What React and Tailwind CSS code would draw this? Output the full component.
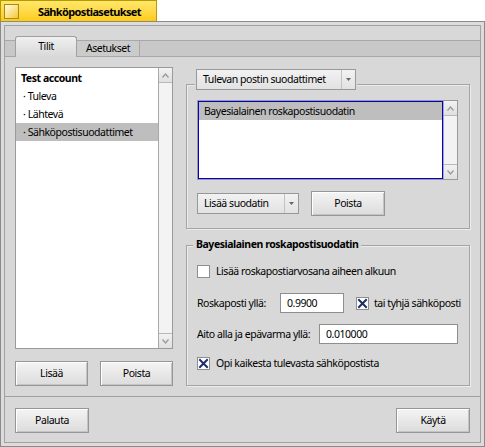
import React from 'react';

const btn =
  'flex items-center justify-center border border-[#969696] bg-gradient-to-b from-[#f4f4f4] to-[#dcdcdc] shadow-[inset_1px_1px_0_#ffffff,inset_-1px_-1px_0_#c4c4c4] text-black';

function CheckMark() {
  return (
    <svg width="11" height="11" viewBox="0 0 11 11" className="block">
      <path d="M2 2 L9 9 M9 2 L2 9" stroke="#1d2d69" strokeWidth="2" strokeLinecap="square" />
    </svg>
  );
}

function Checkbox({ checked }) {
  return (
    <div className="flex h-[13px] w-[13px] shrink-0 items-center justify-center border border-[#8e8e8e] bg-white">
      {checked && <CheckMark />}
    </div>
  );
}

function Arrow({ up }) {
  return (
    <svg width="7" height="5" viewBox="0 0 7 5" className="block">
      <path d={up ? 'M0.5 4.5 L3.5 1 L6.5 4.5' : 'M0.5 0.5 L3.5 4 L6.5 0.5'} fill="none" stroke="#9a9a9a" strokeWidth="1.3" />
    </svg>
  );
}

function ScrollBar() {
  return (
    <div className="flex w-[14px] shrink-0 flex-col border-l border-[#a8a8a8] bg-[#ececec]">
      <div className="flex h-[15px] items-center justify-center border-b border-[#b8b8b8] bg-gradient-to-b from-[#f2f2f2] to-[#e0e0e0]">
        <Arrow up />
      </div>
      <div className="flex-1 bg-[#f3f3f3]" />
      <div className="flex h-[15px] items-center justify-center border-t border-[#b8b8b8] bg-gradient-to-b from-[#f2f2f2] to-[#e0e0e0]">
        <Arrow />
      </div>
    </div>
  );
}

function MenuField({ label, className }) {
  return (
    <div className={`flex h-[21px] border border-[#989898] bg-gradient-to-b from-[#f2f2f2] to-[#e2e2e2] ${className}`}>
      <div className="flex flex-1 items-center pl-[6px] text-black">{label}</div>
      <div className="flex w-[14px] items-center justify-center border-l border-[#c2c2c2]">
        <svg width="5" height="3" viewBox="0 0 5 3" className="block">
          <path d="M0 0 H5 L2.5 3 Z" fill="#666" />
        </svg>
      </div>
    </div>
  );
}

const accounts = [
  { label: 'Test account', bold: true },
  { label: '· Tuleva' },
  { label: '· Lähtevä' },
  { label: '· Sähköpostisuodattimet', selected: true },
];

export default function App() {
  return (
    <div className="relative h-[447px] w-[485px] whitespace-nowrap bg-white font-['Noto_Sans',sans-serif] text-[10.5px] leading-none tracking-[-0.45px] text-black">
      {/* title tab */}
      <div className="flex h-[21px] w-[157px] items-center gap-[19px] border-r border-t border-l border-[#b89a00] bg-gradient-to-b from-[#ffe76a] to-[#ffcc00] pl-[3px]">
        <div className="h-[15px] w-[15px] shrink-0 border border-[#a88e10] bg-gradient-to-br from-[#fffbe0] to-[#f5c800]" />
        <div className="text-[11px] font-bold tracking-[-0.65px]">Sähköpostiasetukset</div>
      </div>

      {/* window frame */}
      <div className="h-[426px] w-[485px] border border-[#8a8a8a] bg-[#dcdcdc] p-[3px]">
        <div className="flex h-full flex-col border border-[#a2a2a2] bg-[#d8d8d8]">
          {/* tab bar */}
          <div className="mt-[10px] flex h-[21px] items-end">
            <div className="h-[17px] w-[10px] border-y border-[#a8a8a8] bg-[#c8c8c8]" />
            <div className="flex h-[21px] w-[62px] items-center justify-center rounded-t-[3px] border border-b-0 border-[#a0a0a0] bg-gradient-to-b from-[#f0f0f0] to-[#d8d8d8] pb-[1px]">
              Tilit
            </div>
            <div className="flex h-[17px] w-[63px] items-center justify-center border-y border-r border-[#a8a8a8] bg-[#cbcbcb]">
              Asetukset
            </div>
            <div className="h-[17px] flex-1 border-y border-[#a8a8a8] bg-[#c8c8c8]" />
          </div>

          {/* tab panel */}
          <div className="flex h-[340px] gap-[13px] border-b border-[#a0a0a0] px-[10px] pt-[10px]">
            {/* accounts column */}
            <div className="flex w-[158px] flex-col gap-[12px]">
              <div className="flex h-[282px] border border-[#9a9a9a] bg-white">
                <div className="flex flex-1 flex-col pt-[1px]">
                  {accounts.map((a) => (
                    <div
                      key={a.label}
                      className={`flex h-[18px] items-center ${a.bold ? 'pl-[5px] font-bold' : 'pl-[7px]'} ${
                        a.selected ? 'bg-[#bebebe]' : ''
                      }`}
                    >
                      {a.label}
                    </div>
                  ))}
                </div>
                <ScrollBar />
              </div>
              <div className="flex gap-[12px]">
                <div className={`${btn} h-[25px] w-[74px]`}>Lisää</div>
                <div className={`${btn} h-[25px] w-[74px]`}>Poista</div>
              </div>
            </div>

            {/* filters column */}
            <div className="flex w-[284px] flex-col">
              <div className="relative mt-[17px] flex h-[145px] flex-col border border-[#a4a4a4] px-[10px] pt-[15px] shadow-[1px_1px_0_#ececec,inset_1px_1px_0_#ececec]">
                <div className="absolute left-[8px] top-[-16px] bg-[#d8d8d8] px-[1px]">
                  <MenuField label="Tulevan postin suodattimet" className="w-[160px]" />
                </div>
                <div className="flex h-[80px] w-[261px] border border-[#9a9a9a] bg-white">
                  <div className="flex-1 border border-[#0000d0]">
                    <div className="flex h-[18px] items-center bg-[#bebebe] pl-[5px]">Bayesialainen roskapostisuodatin</div>
                  </div>
                  <ScrollBar />
                </div>
                <div className="mt-[11px] flex items-center gap-[12px]">
                  <MenuField label="Lisää suodatin" className="w-[102px]" />
                  <div className={`${btn} h-[25px] w-[74px]`}>Poista</div>
                </div>
              </div>

              <div className="relative mt-[16px] flex h-[141px] flex-col border border-[#a4a4a4] pl-[10px] pt-[19px] shadow-[1px_1px_0_#ececec,inset_1px_1px_0_#ececec]">
                <div className="absolute left-[6px] top-[-7px] bg-[#d8d8d8] px-[3px] font-bold">
                  Bayesialainen roskapostisuodatin
                </div>
                <div className="flex h-[13px] items-center gap-[6px]">
                  <Checkbox />
                  <span>Lisää roskapostiarvosana aiheen alkuun</span>
                </div>
                <div className="mt-[15px] flex h-[20px] items-center">
                  <span className="w-[83px]">Roskaposti yllä:</span>
                  <div className="flex h-[20px] w-[64px] items-center border border-[#8e8e8e] bg-white pl-[6px]">0.9900</div>
                  <div className="ml-[12px] flex items-center gap-[5px]">
                    <Checkbox checked />
                    <span>tai tyhjä sähköposti</span>
                  </div>
                </div>
                <div className="mt-[11px] flex h-[20px] items-center">
                  <span className="w-[122px]">Aito alla ja epävarma yllä:</span>
                  <div className="flex h-[20px] w-[139px] items-center border border-[#8e8e8e] bg-white pl-[6px]">0.010000</div>
                </div>
                <div className="mt-[13px] flex h-[13px] items-center gap-[6px]">
                  <Checkbox checked />
                  <span>Opi kaikesta tulevasta sähköpostista</span>
                </div>
              </div>
            </div>
          </div>

          {/* bottom buttons */}
          <div className="flex justify-between px-[10px] pt-[11px]">
            <div className={`${btn} h-[25px] w-[74px]`}>Palauta</div>
            <div className={`${btn} h-[25px] w-[74px]`}>Käytä</div>
          </div>
        </div>
      </div>
    </div>
  );
}
